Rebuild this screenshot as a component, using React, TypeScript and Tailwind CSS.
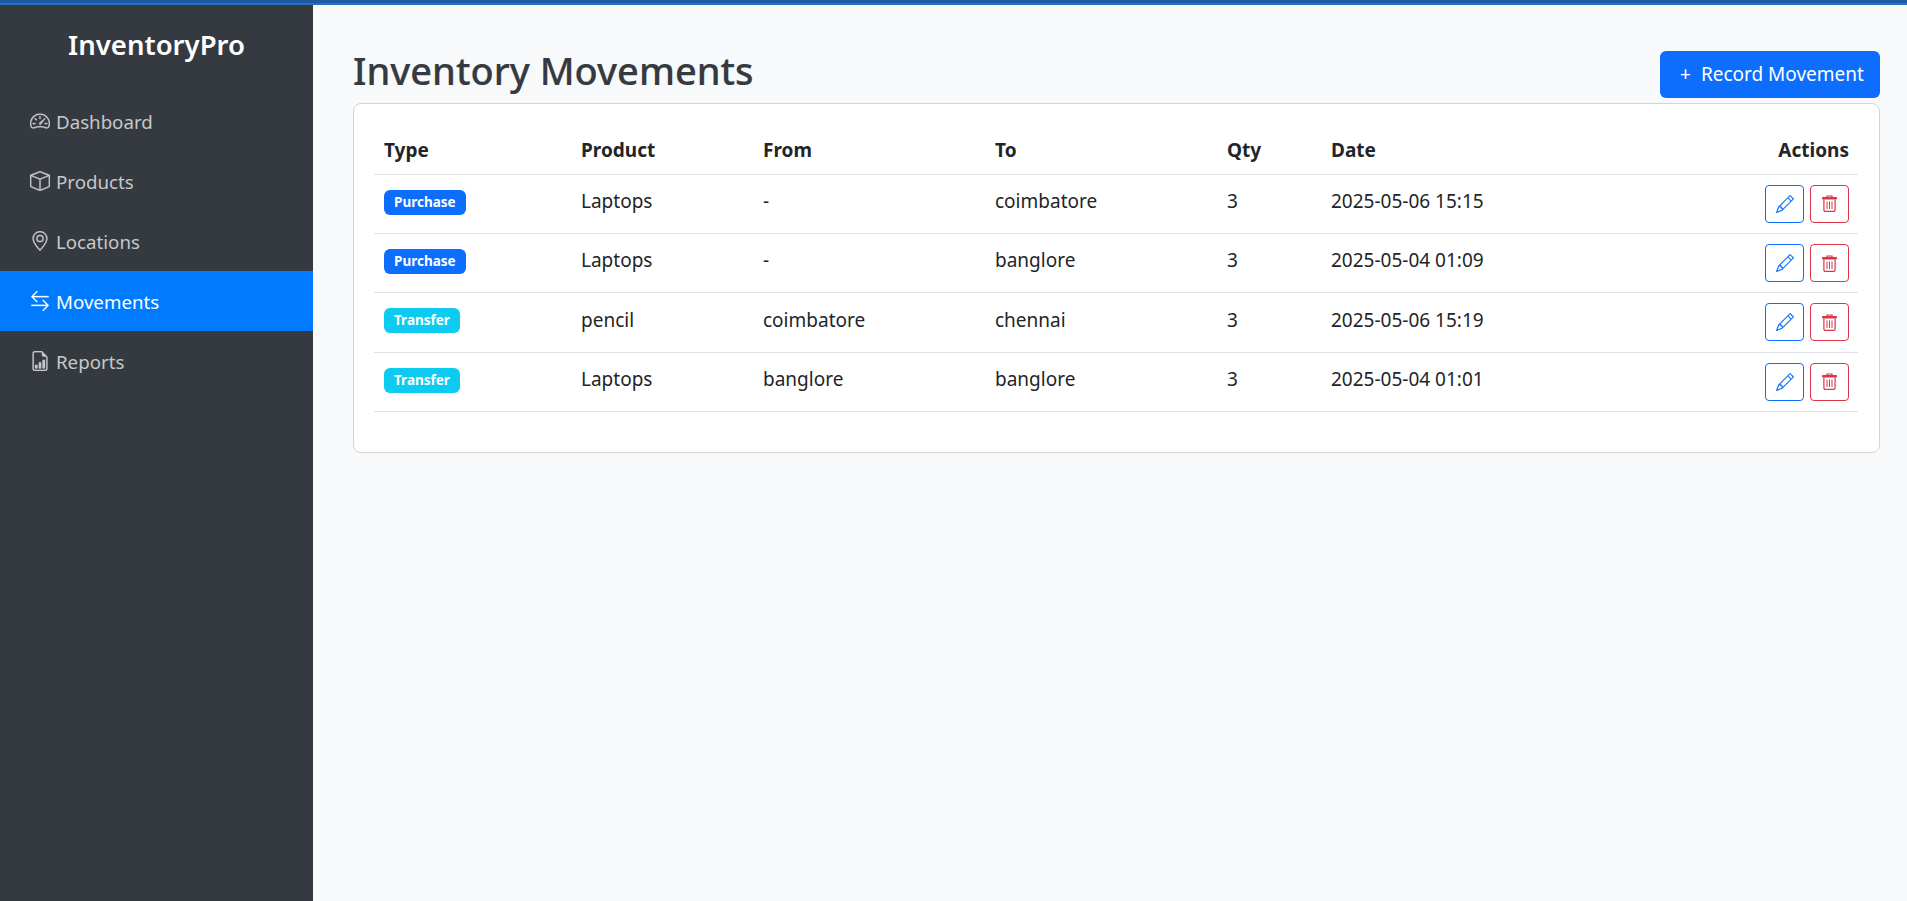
import React from "react";
import {
  BsSpeedometer2,
  BsBox,
  BsGeoAlt,
  BsArrowLeftRight,
  BsFileEarmarkBarGraph,
  BsPencil,
} from "react-icons/bs";

const navItems = [
  { label: "Dashboard", icon: BsSpeedometer2 },
  { label: "Products", icon: BsBox },
  { label: "Locations", icon: BsGeoAlt },
  { label: "Movements", icon: BsArrowLeftRight, active: true },
  { label: "Reports", icon: BsFileEarmarkBarGraph },
];

const movements = [
  { type: "Purchase", product: "Laptops", from: "-", to: "coimbatore", qty: 3, date: "2025-05-06 15:15" },
  { type: "Purchase", product: "Laptops", from: "-", to: "banglore", qty: 3, date: "2025-05-04 01:09" },
  { type: "Transfer", product: "pencil", from: "coimbatore", to: "chennai", qty: 3, date: "2025-05-06 15:19" },
  { type: "Transfer", product: "Laptops", from: "banglore", to: "banglore", qty: 3, date: "2025-05-04 01:01" },
];

// lid is solid in the reference, none of the packaged trash icons have that
function TrashIcon() {
  return (
    <svg viewBox="0 0 15 17" className="h-[17px] w-[15px]" fill="none" stroke="currentColor">
      <path d="M5 2.2V1h5v1.2" strokeWidth="1.2" />
      <rect x="0" y="2" width="15" height="2.4" rx="0.8" fill="currentColor" stroke="none" />
      <path d="M1.9 4.4V15a1.4 1.4 0 0 0 1.4 1.4h8.4a1.4 1.4 0 0 0 1.4-1.4V4.4" strokeWidth="1.2" />
      <path d="M5 6.5v7.5M7.5 6.5v7.5M10 6.5v7.5" strokeWidth="1" />
    </svg>
  );
}

function Sidebar() {
  return (
    <aside className="w-[313px] shrink-0 bg-[#343a40]">
      <div className="pt-[19px] pb-[25px] text-center text-[27.5px] leading-[42px] font-semibold text-white">
        InventoryPro
      </div>
      <nav className="flex flex-col">
        {navItems.map((item) => (
          <a
            key={item.label}
            className={`flex h-[60px] items-center pl-[30px] text-[18.7px] ${
              item.active ? "bg-[#007bff] text-white" : "text-[#c6c8ca]"
            }`}
          >
            <item.icon className="mr-[6px] h-[20px] w-[20px] stroke-current stroke-[0.2px]" />
            <span className="pt-[2px]">{item.label}</span>
          </a>
        ))}
      </nav>
    </aside>
  );
}

export default function App() {
  return (
    <div className="flex min-h-[901px] flex-col bg-[#f8f9fa] font-['Noto_Sans','Open_Sans',sans-serif]">
      <div className="h-[5px] border-b-2 border-[#2b6fb8] bg-[#1c5ba4]" />
      <div className="flex flex-1">
        <Sidebar />
        <main className="flex-1 pl-[40px] pr-[27px] pt-[46px]">
          <div className="flex items-start justify-between">
            <h1 className="-mt-[7px] mb-[7px] text-[38px] leading-[52px] font-medium text-[#343a40] [-webkit-text-stroke:0.2px_#343a40]">
              Inventory Movements
            </h1>
            <button className="flex h-[47px] w-[220px] items-center rounded-[6px] bg-[#0d6efd] pl-[20px] text-[19px] text-white">
              <span className="mr-[10px]">+</span>
              Record Movement
            </button>
          </div>
          <div className="rounded-[8px] border border-[#d2d4d6] bg-white pl-[20px] pr-[21px] pt-[20px] pb-[40px]">
            <table className="w-full table-fixed border-collapse text-[19px] text-[#212529]">
              <thead>
                <tr className="h-[50px] border-b border-[#dee2e6] text-left">
                  <th className="w-[197px] pl-[10px] pt-[2px] font-bold">Type</th>
                  <th className="w-[182px] pl-[10px] pt-[2px] font-bold">Product</th>
                  <th className="w-[232px] pl-[10px] pt-[2px] font-bold">From</th>
                  <th className="w-[232px] pl-[10px] pt-[2px] font-bold">To</th>
                  <th className="w-[104px] pl-[10px] pt-[2px] font-bold">Qty</th>
                  <th className="pl-[10px] pt-[2px] font-bold">Date</th>
                  <th className="w-[200px] pr-[9px] pt-[2px] text-right font-bold">Actions</th>
                </tr>
              </thead>
              <tbody>
                {movements.map((m, i) => (
                  <tr key={i} className="h-[59.4px] border-b border-[#dee2e6]">
                    <td className="pl-[10px] pb-[7px]">
                      <span
                        className={`inline-block rounded-[6px] px-[10px] py-[3px] text-[13.5px] leading-[19px] font-bold text-white ${
                          m.type === "Purchase" ? "bg-[#0d6efd]" : "bg-[#0dcaf0]"
                        }`}
                      >
                        {m.type}
                      </span>
                    </td>
                    <td className="pl-[10px] pb-[5px]">{m.product}</td>
                    <td className="pl-[10px] pb-[5px]">{m.from}</td>
                    <td className="pl-[10px] pb-[5px]">{m.to}</td>
                    <td className="pl-[10px] pb-[5px]">{m.qty}</td>
                    <td className="pl-[10px] pb-[5px]">{m.date}</td>
                    <td className="pr-[9px]">
                      <div className="flex justify-end gap-[6px]">
                        <button className="flex h-[38px] w-[39px] items-center justify-center rounded-[4px] border border-[#0d6efd] text-[#0d6efd]">
                          <BsPencil className="h-[18px] w-[18px]" />
                        </button>
                        <button className="flex h-[38px] w-[39px] items-center justify-center rounded-[4px] border border-[#dc3545] text-[#dc3545]">
                          <TrashIcon />
                        </button>
                      </div>
                    </td>
                  </tr>
                ))}
              </tbody>
            </table>
          </div>
        </main>
      </div>
    </div>
  );
}
